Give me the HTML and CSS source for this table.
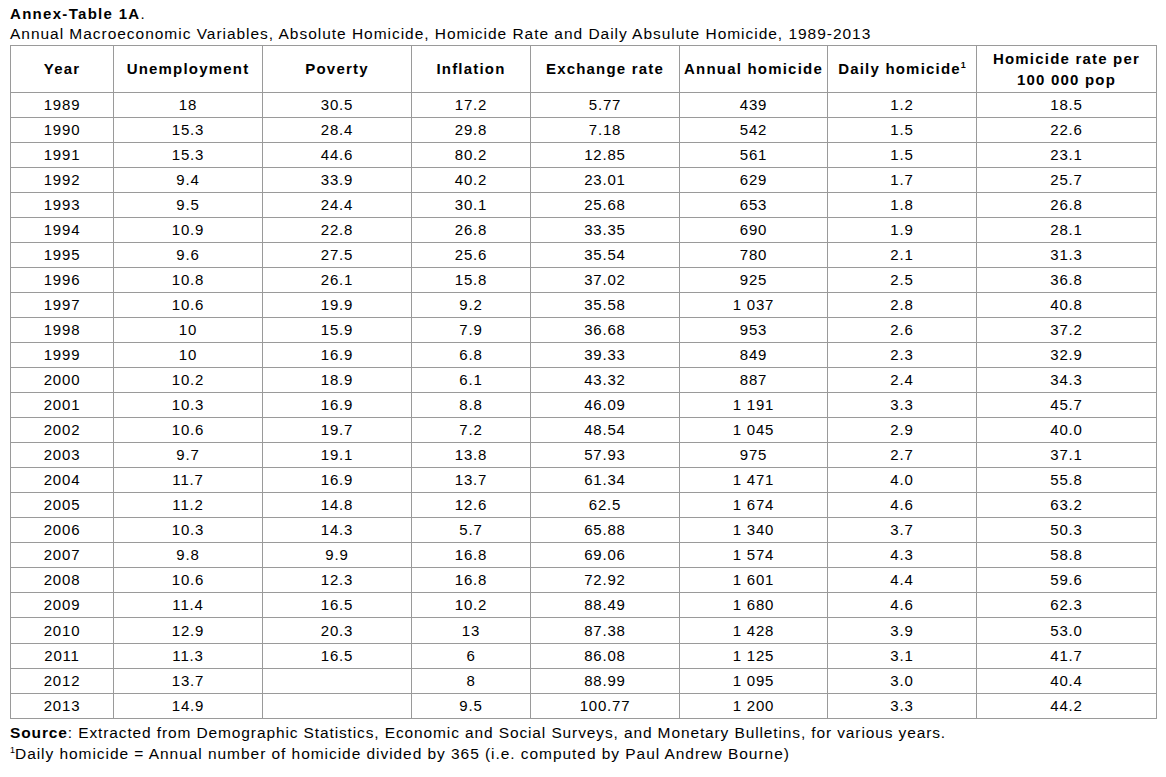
FILE: index.html
```html
<!DOCTYPE html>
<html>
<head>
<meta charset="utf-8">
<link rel="stylesheet" href="styles.css">
</head>
<body>
<div class="page">
  <div class="title"><b>Annex-Table 1A</b>.</div>
  <div class="subtitle">Annual Macroeconomic Variables, Absolute Homicide, Homicide Rate and Daily Absulute Homicide, 1989-2013</div>
  <table class="data">
    <colgroup>
      <col class="c1"><col class="c2"><col class="c3"><col class="c4"><col class="c5"><col class="c6"><col class="c7"><col class="c8">
    </colgroup>
    <thead>
      <tr>
        <th>Year</th><th>Unemployment</th><th>Poverty</th><th>Inflation</th><th>Exchange rate</th><th>Annual homicide</th><th>Daily homicide<sup>1</sup></th><th>Homicide rate per<br>100 000 pop</th>
      </tr>
    </thead>
    <tbody>
      <tr><td>1989</td><td>18</td><td>30.5</td><td>17.2</td><td>5.77</td><td>439</td><td>1.2</td><td>18.5</td></tr>
      <tr><td>1990</td><td>15.3</td><td>28.4</td><td>29.8</td><td>7.18</td><td>542</td><td>1.5</td><td>22.6</td></tr>
      <tr><td>1991</td><td>15.3</td><td>44.6</td><td>80.2</td><td>12.85</td><td>561</td><td>1.5</td><td>23.1</td></tr>
      <tr><td>1992</td><td>9.4</td><td>33.9</td><td>40.2</td><td>23.01</td><td>629</td><td>1.7</td><td>25.7</td></tr>
      <tr><td>1993</td><td>9.5</td><td>24.4</td><td>30.1</td><td>25.68</td><td>653</td><td>1.8</td><td>26.8</td></tr>
      <tr><td>1994</td><td>10.9</td><td>22.8</td><td>26.8</td><td>33.35</td><td>690</td><td>1.9</td><td>28.1</td></tr>
      <tr><td>1995</td><td>9.6</td><td>27.5</td><td>25.6</td><td>35.54</td><td>780</td><td>2.1</td><td>31.3</td></tr>
      <tr><td>1996</td><td>10.8</td><td>26.1</td><td>15.8</td><td>37.02</td><td>925</td><td>2.5</td><td>36.8</td></tr>
      <tr><td>1997</td><td>10.6</td><td>19.9</td><td>9.2</td><td>35.58</td><td>1 037</td><td>2.8</td><td>40.8</td></tr>
      <tr><td>1998</td><td>10</td><td>15.9</td><td>7.9</td><td>36.68</td><td>953</td><td>2.6</td><td>37.2</td></tr>
      <tr><td>1999</td><td>10</td><td>16.9</td><td>6.8</td><td>39.33</td><td>849</td><td>2.3</td><td>32.9</td></tr>
      <tr><td>2000</td><td>10.2</td><td>18.9</td><td>6.1</td><td>43.32</td><td>887</td><td>2.4</td><td>34.3</td></tr>
      <tr><td>2001</td><td>10.3</td><td>16.9</td><td>8.8</td><td>46.09</td><td>1 191</td><td>3.3</td><td>45.7</td></tr>
      <tr><td>2002</td><td>10.6</td><td>19.7</td><td>7.2</td><td>48.54</td><td>1 045</td><td>2.9</td><td>40.0</td></tr>
      <tr><td>2003</td><td>9.7</td><td>19.1</td><td>13.8</td><td>57.93</td><td>975</td><td>2.7</td><td>37.1</td></tr>
      <tr><td>2004</td><td>11.7</td><td>16.9</td><td>13.7</td><td>61.34</td><td>1 471</td><td>4.0</td><td>55.8</td></tr>
      <tr><td>2005</td><td>11.2</td><td>14.8</td><td>12.6</td><td>62.5</td><td>1 674</td><td>4.6</td><td>63.2</td></tr>
      <tr><td>2006</td><td>10.3</td><td>14.3</td><td>5.7</td><td>65.88</td><td>1 340</td><td>3.7</td><td>50.3</td></tr>
      <tr><td>2007</td><td>9.8</td><td>9.9</td><td>16.8</td><td>69.06</td><td>1 574</td><td>4.3</td><td>58.8</td></tr>
      <tr><td>2008</td><td>10.6</td><td>12.3</td><td>16.8</td><td>72.92</td><td>1 601</td><td>4.4</td><td>59.6</td></tr>
      <tr><td>2009</td><td>11.4</td><td>16.5</td><td>10.2</td><td>88.49</td><td>1 680</td><td>4.6</td><td>62.3</td></tr>
      <tr><td>2010</td><td>12.9</td><td>20.3</td><td>13</td><td>87.38</td><td>1 428</td><td>3.9</td><td>53.0</td></tr>
      <tr><td>2011</td><td>11.3</td><td>16.5</td><td>6</td><td>86.08</td><td>1 125</td><td>3.1</td><td>41.7</td></tr>
      <tr><td>2012</td><td>13.7</td><td></td><td>8</td><td>88.99</td><td>1 095</td><td>3.0</td><td>40.4</td></tr>
      <tr><td>2013</td><td>14.9</td><td></td><td>9.5</td><td>100.77</td><td>1 200</td><td>3.3</td><td>44.2</td></tr>
    </tbody>
  </table>
  <div class="notes">
    <p class="source"><b>Source</b>: Extracted from Demographic Statistics, Economic and Social Surveys, and Monetary Bulletins, for various years.</p>
    <p class="footnote"><sup>1</sup>Daily homicide = Annual number of homicide divided by 365 (i.e. computed by Paul Andrew Bourne)</p>
  </div>
</div>
</body>
</html>
```

FILE: styles.css
```css
html, body {
  margin: 0;
  padding: 0;
  background: #ffffff;
}
body {
  font-family: "Liberation Sans", Arial, sans-serif;
  color: #000000;
  font-size: 15px;
}
.page {
  padding: 4px 10px 0 10px;
}
.title {
  font-size: 15px;
  line-height: 20px;
  letter-spacing: 1.3px;
}
.subtitle {
  font-size: 15.5px;
  line-height: 20px;
  letter-spacing: 0.97px;
}
.data {
  border-collapse: collapse;
  width: 1146px;
  table-layout: fixed;
  margin-top: 1px;
}
.c1 { width: 103px; }
.c2 { width: 149px; }
.c3 { width: 149px; }
.c4 { width: 119px; }
.c5 { width: 149px; }
.c6 { width: 148px; }
.c7 { width: 149px; }
.c8 { width: 180px; }
.data th, .data td {
  border: 1px solid #9a9a9a;
  text-align: center;
  padding: 0;
}
.data th {
  height: 45.5px;
  font-weight: bold;
  line-height: 21px;
  letter-spacing: 1.2px;
  vertical-align: middle;
}
.data th sup {
  font-size: 9px;
  letter-spacing: 0;
  vertical-align: 6px;
  line-height: 0;
}
.data td {
  height: 24.06px;
  line-height: 18px;
  letter-spacing: 0.8px;
  vertical-align: middle;
}
.notes p {
  margin: 0;
  font-size: 15.5px;
  line-height: 21px;
  letter-spacing: 0.95px;
}
.notes .source {
  margin-top: 3px;
  letter-spacing: 0.88px;
}
.notes sup {
  font-size: 9px;
  letter-spacing: 0;
  vertical-align: 6px;
  line-height: 0;
}
```
